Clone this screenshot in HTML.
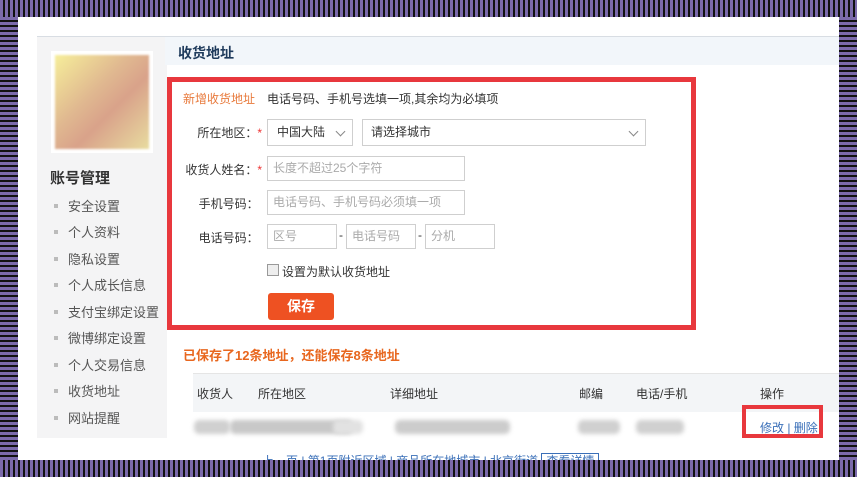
<!DOCTYPE html>
<html><head><meta charset="utf-8"><style>
*{margin:0;padding:0;box-sizing:border-box}
body{width:857px;height:477px;position:relative;overflow:hidden;background:#fff;font-family:"Liberation Sans","Noto Sans CJK SC",sans-serif;font-size:12px;color:#333}
.a{position:absolute}
.st{position:absolute;background:repeating-linear-gradient(to bottom,#7b6aab 0 3px,#111 3px 5px)}
.sv{position:absolute;background:repeating-linear-gradient(to right,#7b6aab 0 3px,#111 3px 5px)}
.in{position:absolute;border:1px solid #cfcfcf;background:#fff;color:#aaa;font-size:12px;padding-left:5px;line-height:23px}
.lb{position:absolute;width:88px;text-align:right;font-size:12px;color:#333}
.sd{position:absolute;left:50px;font-size:13px;color:#555}
.sd:before{content:"";display:inline-block;width:4px;height:4px;background:#bbb;margin:0 10px 3px 4px}
.blur{position:absolute;background:#d0d0d0;filter:blur(2px);height:14px;border-radius:5px}
.ch{position:absolute;right:8px;top:8px;width:7px;height:7px;border-right:1px solid #888;border-bottom:1px solid #888;transform:rotate(45deg)}
</style></head><body>
<div class="a" style="left:37px;top:36px;width:802px;height:1px;background:#d8dde3"></div>
<div class="a" style="left:37px;top:37px;width:130px;height:401px;background:#f4f4f5"></div>
<div class="a" style="left:51px;top:51px;width:102px;height:102px;background:#fff;padding:4px"><div style="width:100%;height:100%;background:linear-gradient(135deg,#f6ee9a,#e0b890 40%,#d9a28a 60%,#e8dca0);filter:blur(1px)"></div></div>
<div class="a" style="left:50px;top:167px;font-size:15px;font-weight:bold;color:#333">账号管理</div>
<div class="sd" style="top:196px">安全设置</div>
<div class="sd" style="top:222px">个人资料</div>
<div class="sd" style="top:249px">隐私设置</div>
<div class="sd" style="top:275px">个人成长信息</div>
<div class="sd" style="top:302px">支付宝绑定设置</div>
<div class="sd" style="top:328px">微博绑定设置</div>
<div class="sd" style="top:355px">个人交易信息</div>
<div class="sd" style="top:381px">收货地址</div>
<div class="sd" style="top:408px">网站提醒</div>
<div class="a" style="left:165px;top:37px;width:674px;height:28px;background:#f2f6fa"></div>
<div class="a" style="left:178px;top:43px;font-size:14px;font-weight:bold;color:#1f3b5c">收货地址</div>
<div class="a" style="left:167px;top:77px;width:529px;height:253px;border:5px solid #e8383d"></div>
<div class="a" style="left:183px;top:90px;color:#e87a3c">新增收货地址</div>
<div class="a" style="left:267px;top:90px;color:#333">电话号码、手机号选填一项,其余均为必填项</div>
<div class="lb" style="left:174px;top:124px">所在地区：<span style="color:#e33">*</span></div>
<div class="in" style="left:267px;top:119px;width:86px;height:27px;color:#333;line-height:25px;padding-left:9px">中国大陆<span class="ch"></span></div>
<div class="in" style="left:362px;top:119px;width:284px;height:27px;color:#333;line-height:25px;padding-left:8px">请选择城市<span class="ch"></span></div>
<div class="lb" style="left:174px;top:161px">收货人姓名：<span style="color:#e33">*</span></div>
<div class="in" style="left:267px;top:156px;width:198px;height:25px">长度不超过25个字符</div>
<div class="lb" style="left:174px;top:195px">手机号码：&nbsp;</div>
<div class="in" style="left:267px;top:190px;width:198px;height:25px">电话号码、手机号码必须填一项</div>
<div class="lb" style="left:174px;top:229px">电话号码：&nbsp;</div>
<div class="in" style="left:267px;top:224px;width:70px;height:25px">区号</div>
<div class="a" style="left:339px;top:228px">-</div>
<div class="in" style="left:346px;top:224px;width:70px;height:25px">电话号码</div>
<div class="a" style="left:418px;top:228px">-</div>
<div class="in" style="left:425px;top:224px;width:70px;height:25px">分机</div>
<div class="a" style="left:267px;top:264px;width:12px;height:12px;border:1px solid #999;background:#eee"></div>
<div class="a" style="left:282px;top:263px;color:#333">设置为默认收货地址</div>
<div class="a" style="left:268px;top:293px;width:66px;height:27px;background:#ee5122;border-radius:3px;color:#fff;font-weight:bold;font-size:14px;text-align:center;line-height:27px">保存</div>
<div class="a" style="left:183px;top:345px;color:#e8671f;font-weight:bold;font-size:13px">已保存了12条地址，还能保存8条地址</div>
<div class="a" style="left:193px;top:373px;width:646px;height:39px;background:#f3f5f7;border-top:1px solid #e5e5e5"></div>
<div class="a" style="left:197px;top:385px">收货人</div>
<div class="a" style="left:258px;top:385px">所在地区</div>
<div class="a" style="left:390px;top:385px">详细地址</div>
<div class="a" style="left:579px;top:385px">邮编</div>
<div class="a" style="left:636px;top:385px">电话/手机</div>
<div class="a" style="left:760px;top:385px">操作</div>
<div class="blur" style="left:194px;top:420px;width:36px"></div>
<div class="blur" style="left:230px;top:420px;width:123px;background:#c8c8c8"></div>
<div class="blur" style="left:333px;top:420px;width:30px;background:#e2e2e2"></div>
<div class="blur" style="left:395px;top:420px;width:115px;background:#cccccc"></div>
<div class="blur" style="left:578px;top:420px;width:42px"></div>
<div class="blur" style="left:636px;top:420px;width:48px"></div>
<div class="a" style="left:742px;top:405px;width:81px;height:33px;border:4px solid #e8383d"></div>
<div class="a" style="left:760px;top:419px;color:#3a6fb8">修改 | 删除</div>
<div class="a" style="left:262px;top:452px;color:#3a6fb8;font-size:12px">上一页 | 第1页附近区域 | 商品所在地城市 | 北京街道 <span style="border:1px solid #3a6fb8;padding:0 4px">查看详情</span></div>
<div class="sv" style="left:0;top:0;width:857px;height:17px"></div>
<div class="sv" style="left:0;top:460px;width:857px;height:17px"></div>
<div class="st" style="left:0;top:17px;width:18px;height:443px"></div>
<div class="st" style="left:839px;top:17px;width:18px;height:443px"></div>
</body></html>
